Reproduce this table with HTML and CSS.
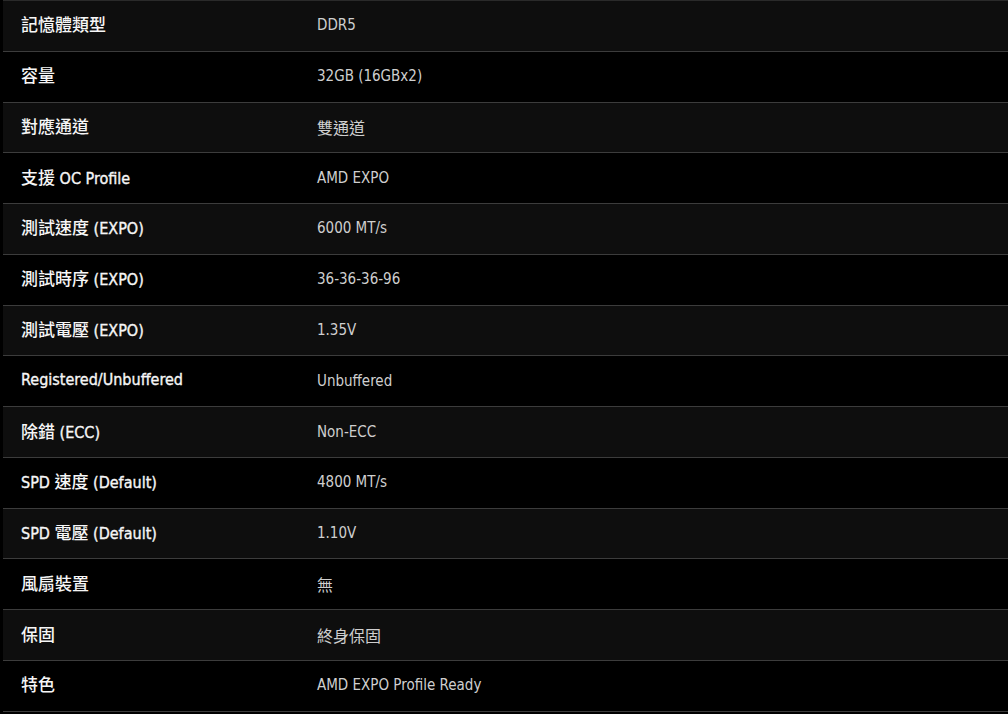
FILE: index.html
```html
<!DOCTYPE html>
<html lang="zh-Hant">
<head>
<meta charset="utf-8">
<title>規格</title>
<link rel="stylesheet" href="styles.css">
</head>
<body>
<div class="spec">
  <div class="row"><div class="k"><span class="zh">記憶體類型</span></div><div class="v">DDR5</div></div>
  <div class="row"><div class="k"><span class="zh">容量</span></div><div class="v">32GB (16GBx2)</div></div>
  <div class="row"><div class="k"><span class="zh">對應通道</span></div><div class="v"><span class="zh">雙通道</span></div></div>
  <div class="row"><div class="k"><span class="zh">支援</span> OC Profile</div><div class="v">AMD EXPO</div></div>
  <div class="row"><div class="k"><span class="zh">測試速度</span> (EXPO)</div><div class="v">6000 MT/s</div></div>
  <div class="row"><div class="k"><span class="zh">測試時序</span> (EXPO)</div><div class="v">36-36-36-96</div></div>
  <div class="row"><div class="k"><span class="zh">測試電壓</span> (EXPO)</div><div class="v">1.35V</div></div>
  <div class="row"><div class="k">Registered/Unbuffered</div><div class="v">Unbuffered</div></div>
  <div class="row"><div class="k"><span class="zh">除錯</span> (ECC)</div><div class="v">Non-ECC</div></div>
  <div class="row"><div class="k">SPD <span class="zh">速度</span> (Default)</div><div class="v">4800 MT/s</div></div>
  <div class="row"><div class="k">SPD <span class="zh">電壓</span> (Default)</div><div class="v">1.10V</div></div>
  <div class="row"><div class="k"><span class="zh">風扇裝置</span></div><div class="v"><span class="zh">無</span></div></div>
  <div class="row"><div class="k"><span class="zh">保固</span></div><div class="v"><span class="zh">終身保固</span></div></div>
  <div class="row"><div class="k"><span class="zh">特色</span></div><div class="v">AMD EXPO Profile Ready</div></div>
</div>
</body>
</html>
```
FILE: styles.css
```css
html, body {
  margin: 0;
  padding: 0;
  background: #000;
}
body {
  font-family: "DejaVu Sans Condensed", "Noto Sans CJK TC", sans-serif;
  overflow: hidden;
}
.spec {
  margin-left: 3px;
  border-top: 1px solid #2a2a2a;
}
.row {
  display: grid;
  grid-template-columns: 296px 1fr;
  align-items: center;
  height: 49.78px;
  border-bottom: 1px solid #3c3c3c;
  background: #000;
}
.row:nth-child(odd) {
  background: #0e0e0e;
}
.k {
  padding-left: 18px;
  color: #f6f6f6;
  font-size: 16px;
  -webkit-text-stroke: 0.35px #f6f6f6;
  margin-top: -4px;
}
.k .zh {
  font-family: "Noto Sans CJK TC", sans-serif;
  font-size: 17px;
  font-weight: 500;
  -webkit-text-stroke: 0;
}
.v {
  padding-left: 18px;
  color: #cfcfcf;
  font-size: 15px;
  margin-top: -1px;
}
.v .zh {
  font-family: "Noto Sans CJK TC", sans-serif;
  font-size: 16px;
}
```
